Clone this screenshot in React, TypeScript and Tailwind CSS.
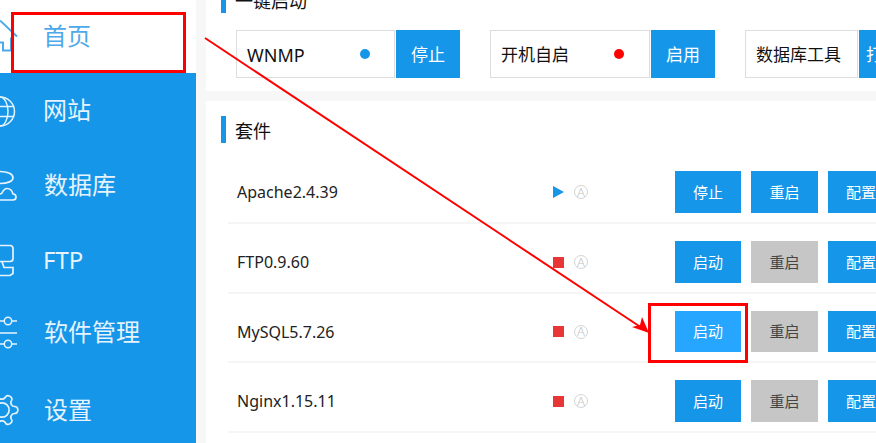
import React from "react";

const font = { fontFamily: '"Noto Sans", "Noto Sans CJK SC", sans-serif' };

const iconProps = {
  width: 24,
  height: 36,
  viewBox: "0 0 24 36",
  fill: "none",
  stroke: "currentColor",
  strokeWidth: 1.7,
};

const HomeIcon = () => (
  <svg {...iconProps} strokeWidth={2}>
    <path d="M0 2.500 17 18.500" />
    <path d="M0 24.500H3V32.500H11V19.500" />
  </svg>
);

const GlobeIcon = () => (
  <svg {...iconProps} strokeWidth={1.5}>
    <circle cx="0" cy="19.500" r="14.500" />
    <ellipse cx="0" cy="19.500" rx="8" ry="14.500" />
    <path d="M0 14.500H14M0 24.500H14" />
  </svg>
);

const DatabaseIcon = () => (
  <svg {...iconProps}>
    <path d="M0 4.500C8 4.500 13 7 13 11C13 14 8 16.500 0 16.500" />
    <path d="M0 33H13C17 33 17 27 13 27C12 23 10 21.500 7 21.500C4 21.500 3 24 2 26C1 27 0 27 0 27" />
  </svg>
);

const ServerIcon = () => (
  <svg {...iconProps}>
    <path d="M0 3.500H10a3 3 0 0 1 3 3V16.500a3 3 0 0 1-3 3H0" />
    <path d="M2 19.500 4 25.500H13V31.500L10 33.500H0" />
  </svg>
);

const SlidersIcon = () => (
  <svg {...iconProps} strokeWidth={1.5}>
    <path d="M0 7H4M12 7H17M0 19H17M0 30H4M12 30H17" />
    <circle cx="8" cy="7" r="3.700" />
    <circle cx="8" cy="30" r="3.700" />
  </svg>
);

const GearIcon = () => (
  <svg width="38" height="38" viewBox="0 0 24 24" fill="none" stroke="currentColor" strokeWidth="1.050" className="-ml-[17px] rotate-90">
    <path d="M12.220 2h-.44a2 2 0 0 0-2 2v.18a2 2 0 0 1-1 1.730l-.43.25a2 2 0 0 1-2 0l-.15-.08a2 2 0 0 0-2.730.73l-.22.38a2 2 0 0 0 .73 2.730l.15.1a2 2 0 0 1 1 1.720v.51a2 2 0 0 1-1 1.740l-.15.09a2 2 0 0 0-.73 2.730l.22.38a2 2 0 0 0 2.730.73l.15-.08a2 2 0 0 1 2 0l.43.25a2 2 0 0 1 1 1.730V20a2 2 0 0 0 2 2h.44a2 2 0 0 0 2-2v-.18a2 2 0 0 1 1-1.730l.43-.25a2 2 0 0 1 2 0l.15.08a2 2 0 0 0 2.730-.73l.22-.39a2 2 0 0 0-.73-2.730l-.15-.08a2 2 0 0 1-1-1.740v-.5a2 2 0 0 1 1-1.740l.15-.09a2 2 0 0 0 .73-2.730l-.22-.38a2 2 0 0 0-2.730-.73l-.15.08a2 2 0 0 1-2 0l-.43-.25a2 2 0 0 1-1-1.730V4a2 2 0 0 0-2-2z" />
    <circle cx="12" cy="12" r="4.500" />
  </svg>
);

const menu = [
  { label: "首页", icon: <HomeIcon />, active: true, height: "h-[73px]", iconWidth: "w-[43px]" },
  { label: "网站", icon: <GlobeIcon />, active: false, height: "h-[75px]", iconWidth: "w-[43px]" },
  { label: "数据库", icon: <DatabaseIcon />, active: false, height: "h-[75px]", iconWidth: "w-[44px]" },
  { label: "FTP", icon: <ServerIcon />, active: false, height: "h-[75px]", iconWidth: "w-[43px]" },
  { label: "软件管理", icon: <SlidersIcon />, active: false, height: "h-[70px]", iconWidth: "w-[44px]" },
  { label: "设置", icon: <GearIcon />, active: false, height: "h-[86px]", iconWidth: "w-[44px]" },
];

const suites = [
  { name: "Apache2.4.39", running: true, action: "停止", height: "h-[70px]", btn: "h-[42px]" },
  { name: "FTP0.9.60", running: false, action: "启动", height: "h-[70px]", btn: "h-[42px]" },
  { name: "MySQL5.7.26", running: false, action: "启动", height: "h-[69px]", btn: "h-[41px]", hover: true },
  { name: "Nginx1.15.11", running: false, action: "启动", height: "h-[70px]", btn: "h-[42px]" },
];

const QuickBox = ({
  label,
  dot,
  action,
  boxWidth,
  labelClass,
  actionWidth = "w-[64px]",
}: {
  label: string;
  dot?: string;
  action: string;
  boxWidth: string;
  labelClass?: string;
  actionWidth?: string;
}) => (
  <div className="flex h-[48px] flex-none">
    <div className={`flex items-center border border-[#dddddd] pl-[10px] text-[17px] text-[#111111] ${boxWidth}`}>
      <span className={`pt-[2px] ${labelClass}`}>{label}</span>
      {dot && <span className={`h-[10px] w-[10px] rounded-full ${dot}`} />}
    </div>
    <button className={`ml-px flex flex-none items-center justify-center bg-[#1596e8] pt-[2px] text-[17px] text-white ${actionWidth}`}>
      {action}
    </button>
  </div>
);

const Title = ({ text }: { text: string }) => (
  <div className="flex h-[27px] items-center">
    <span className="h-full w-[5px] bg-[#1596e8]" />
    <span className="ml-[9px] pt-[3px] text-[18px] text-[#111111]">{text}</span>
  </div>
);

const App: React.FC = () => {
  return (
    <div className="relative flex h-[443px] w-[876px] overflow-hidden bg-[#f7f7f7]" style={font}>
      <aside className="flex w-[196px] flex-none flex-col overflow-hidden bg-[#1596e8]">
        {menu.map((item) => (
          <div
            key={item.label}
            className={`flex flex-none items-center pb-[2px] ${item.height} ${item.active ? "bg-white text-[#4ea9ea]" : "text-[#e6f3fd]"}`}
          >
            <span className={`flex flex-none ${item.iconWidth}`}>{item.icon}</span>
            <span className="text-[24px]">{item.label}</span>
          </div>
        ))}
      </aside>

      <main className="ml-[10px] flex min-w-0 flex-1 flex-col">
        <section className="h-[91px] flex-none overflow-hidden bg-white pl-[15px]">
          <div className="-mt-[14px]">
            <Title text="一键启动" />
          </div>
          <div className="mt-[17px] flex gap-[30px] pl-[15px]">
            <QuickBox label="WNMP" dot="bg-[#1596e8]" action="停止" boxWidth="w-[159px]" labelClass="w-[113px] text-[18px]" />
            <QuickBox label="开机自启" dot="bg-[#ff0000]" action="启用" boxWidth="w-[160px]" labelClass="w-[113px]" />
            <QuickBox label="数据库工具" action="打开" boxWidth="w-[113px]" actionWidth="w-[48px]" />
          </div>
        </section>

        <section className="mt-[10px] flex-1 bg-white pl-[15px] pt-[15px]">
          <Title text="套件" />
          <div className="ml-[7px] mt-[11px]">
            {suites.map((row) => (
              <div key={row.name} className={`flex border-b-2 border-[#f5f5f5] pl-[9px] pt-[17px] ${row.height}`}>
                <div className={`flex w-[316px] flex-none items-center text-[16px] text-[#222222] ${row.btn}`}>{row.name}</div>
                <div className={`flex w-[122px] flex-none items-center ${row.btn}`}>
                  {row.running ? (
                    <span className="h-0 w-0 border-y-[6px] border-l-[11px] border-y-transparent border-l-[#1596e8]" />
                  ) : (
                    <span className="h-[11px] w-[11px] bg-[#e83535]" />
                  )}
                  <span className="ml-[10px] flex h-[14px] w-[14px] items-center justify-center rounded-full border border-[#d4d4d4] text-[13px] font-light leading-none text-[#c4c4c4]">
                    A
                  </span>
                </div>
                <div className={`flex flex-none gap-[10px] text-[15px] ${row.btn}`}>
                  <button className={`w-[66px] text-white ${row.hover ? "bg-[#27a6ff]" : "bg-[#1596e8]"}`}>{row.action}</button>
                  <button className={`w-[67px] ${row.running ? "bg-[#1596e8] text-white" : "bg-[#c6c6c6] text-[#444444]"}`}>重启</button>
                  <button className="w-[66px] bg-[#1596e8] text-white">配置</button>
                </div>
              </div>
            ))}
          </div>
        </section>
      </main>

      {/* annotations drawn on top of the screenshot */}
      <div className="absolute left-[11px] top-[12px] h-[61px] w-[175px] border-[3px] border-[#ff0000]" />
      <div className="absolute left-[648px] top-[303px] h-[60px] w-[100px] border-[3px] border-[#ff0000]" />
      <svg className="absolute left-0 top-0" width="876" height="443" viewBox="0 0 876 443" fill="none">
        <path d="M205 38 642 328" stroke="#ff0000" strokeWidth="2" />
        <path d="M649 333 632 327 640 325 642 317z" fill="#ff0000" />
      </svg>
    </div>
  );
};

export default App;
